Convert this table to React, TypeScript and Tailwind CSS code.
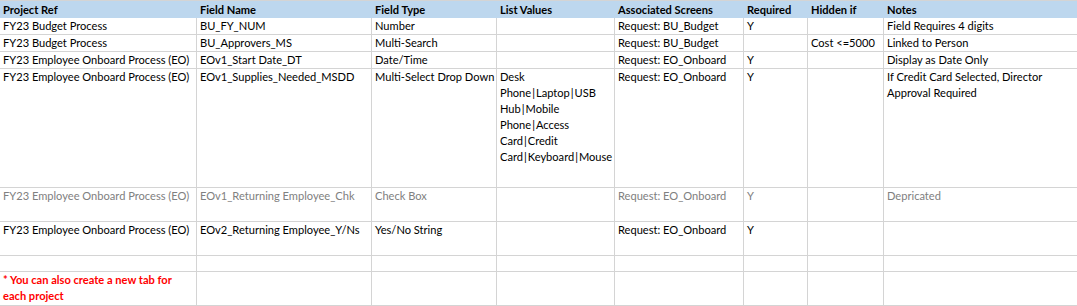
import React from "react";

type Row = {
  cells: React.ReactNode[];
  h: string;
  tone?: string;
};

const cols = "grid grid-cols-[196px_175px_125px_118px_129px_64px_76px_195px]";

const P = () => <span className="mx-[1px]">|</span>;

const rows: Row[] = [
  {
    h: "h-[17px]",
    cells: ["FY23 Budget Process", "BU_FY_NUM", "Number", "", "Request: BU_Budget", "Y", "", "Field Requires 4 digits"],
  },
  {
    h: "h-[17px]",
    cells: ["FY23 Budget Process", "BU_Approvers_MS", "Multi-Search", "", "Request: BU_Budget", "", "Cost <=5000", "Linked to Person"],
  },
  {
    h: "h-[17px]",
    cells: ["FY23 Employee Onboard Process (EO)", "EOv1_Start Date_DT", "Date/Time", "", "Request: EO_Onboard", "Y", "", "Display as Date Only"],
  },
  {
    h: "h-[119px]",
    cells: [
      "FY23 Employee Onboard Process (EO)",
      "EOv1_Supplies_Needed_MSDD",
      "Multi-Select Drop Down",
      <>
        <div>Desk</div>
        <div>Phone<P />Laptop<P />USB</div>
        <div>Hub<P />Mobile</div>
        <div>Phone<P />Access</div>
        <div>Card<P />Credit</div>
        <div>Card<P />Keyboard<P />Mouse</div>
      </>,
      "Request: EO_Onboard",
      "Y",
      "",
      <>
        <div>If Credit Card Selected, Director</div>
        <div>Approval Required</div>
      </>,
    ],
  },
  {
    h: "h-[34px]",
    tone: "text-[#808080]",
    cells: ["FY23 Employee Onboard Process (EO)", "EOv1_Returning Employee_Chk", "Check Box", "", "Request: EO_Onboard", "Y", "", "Depricated"],
  },
  {
    h: "h-[34px]",
    cells: ["FY23 Employee Onboard Process (EO)", "EOv2_Returning Employee_Y/Ns", "Yes/No String", "", "Request: EO_Onboard", "Y", "", ""],
  },
  {
    h: "h-[16px]",
    cells: ["", "", "", "", "", "", "", ""],
  },
  {
    h: "h-[34px]",
    cells: [
      <span className="font-bold text-[#ff0000]">
        <div>* You can also create a new tab for</div>
        <div>each project</div>
      </span>,
      "", "", "", "", "", "", "",
    ],
  },
];

const headers = ["Project Ref", "Field Name", "Field Type", "List Values", "Associated Screens", "Required", "Hidden if", "Notes"];

export default function App() {
  return (
    <div className="w-[1077px] h-[306px] bg-white font-['Lato','Liberation_Sans',sans-serif] text-[11.1px] leading-[16px] text-black overflow-hidden">
      <div className={`${cols} border-t border-[#d4d4d4] bg-[#bdd7ee] h-[18px] font-bold`}>
        {headers.map((h, i) => (
          <div key={i} className={`${i > 0 ? "pl-[4px]" : "pl-[3px]"} pt-[1px] whitespace-nowrap ${i === 7 ? "border-r border-[#d4d4d4]" : ""}`}>
            {h}
          </div>
        ))}
      </div>
      {rows.map((r, ri) => (
        <div key={ri} className={`${cols} ${r.tone ?? ""}`}>
          {r.cells.map((c, ci) => (
            <div
              key={ci}
              className={`${r.h} pl-[3px] whitespace-nowrap overflow-hidden border-b border-[#d4d4d4] ${ci > 0 ? "border-l" : ""} ${ci === 7 ? "border-r" : ""}`}
            >
              {c}
            </div>
          ))}
        </div>
      ))}
    </div>
  );
}
